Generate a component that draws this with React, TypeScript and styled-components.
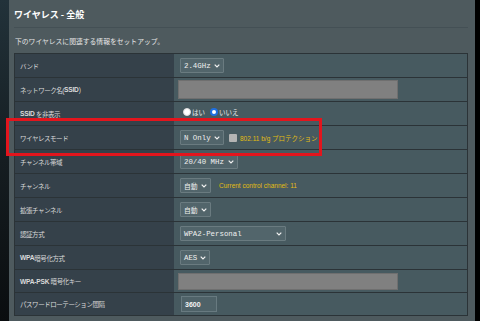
import React from "react";
import styled, { createGlobalStyle } from "styled-components";

const Global = createGlobalStyle`
  html, body { margin: 0; padding: 0; background: #000; }
  body { font-family: "Noto Sans CJK JP", "Liberation Sans", sans-serif; }
`;

const Page = styled.div`
  position: relative;
  width: 480px;
  height: 321px;
  display: flex;
  overflow: hidden;
`;

const LeftStrip = styled.div`
  width: 9px;
  flex: none;
  background: linear-gradient(180deg, #22323a 0%, #151d21 50%, #0a0d0f 100%);
`;

const RightStrip = styled.div`
  width: 5px;
  flex: none;
  background: #000;
`;

const Panel = styled.div`
  flex: 1;
  background: #4e5a5e;
  display: flex;
  flex-direction: column;
  padding: 0 7px 0 5px;
`;

const Title = styled.div`
  height: 27px;
  box-sizing: border-box;
  padding-top: 8px;
  font-family: "Noto Sans CJK JP", sans-serif;
  font-size: 9px;
  font-weight: 700;
  color: #fff;
  line-height: 14px;
`;

const Rule = styled.div`
  height: 1px;
  background: #445055;
`;

const Subtitle = styled.div`
  height: 25px;
  display: flex;
  align-items: center;
  padding-left: 1px;
  padding-top: 1px;
  box-sizing: border-box;
  font-size: 6.8px;
  color: #e6e6e6;
`;

const Table = styled.div`
  border: 1px solid #2b3337;
  border-bottom: none;
  display: flex;
  flex-direction: column;
`;

const Row = styled.div<{ $h: number }>`
  height: ${(p) => p.$h}px;
  box-sizing: border-box;
  display: grid;
  grid-template-columns: 159px 1fr;
  border-bottom: 1px solid #2b3337;
`;

const Label = styled.div`
  background: #35414a;
  display: flex;
  align-items: center;
  padding-left: 5px;
  font-family: "Liberation Sans", "Noto Sans CJK JP", sans-serif;
  font-size: 6.5px;
  letter-spacing: -0.45px;
  color: #dadada;
  white-space: nowrap;
`;

const Latin = styled.span`
  font-weight: 700;
  font-size: 6.6px;
  letter-spacing: -0.2px;
`;

const Value = styled.div`
  background: #475a60;
  display: flex;
  align-items: center;
  padding-left: 6px;
`;

const Select = styled.div<{ $w: number }>`
  width: ${(p) => p.$w}px;
  height: 15px;
  box-sizing: border-box;
  background: #52656b;
  border: 1px solid #6a7b80;
  border-radius: 1px;
  display: flex;
  align-items: center;
  justify-content: space-between;
  padding: 0 3px 0 3px;
  font-family: "Liberation Mono", "Noto Sans CJK JP", monospace;
  font-size: 7.4px;
  color: #f0f0f0;
`;

const SelText = styled.span`
  &:lang(ja) { font-size: 6.8px; }
`;

const TextInput = styled.div<{ $w: number; $h: number }>`
  width: ${(p) => p.$w}px;
  height: ${(p) => p.$h}px;
  box-sizing: border-box;
  background: #808080;
  border: 1px solid #6f6f6f;
  margin-left: -2px;
`;

const NumInput = styled.div`
  width: 36px;
  height: 16px;
  box-sizing: border-box;
  margin-left: 1px;
  background: #4f6268;
  border: 1px solid #687a80;
  display: flex;
  align-items: center;
  padding-left: 3px;
  font-family: "Liberation Sans", sans-serif;
  font-weight: 700;
  font-size: 7px;
  color: #f4f4f4;
`;

const Note = styled.span<{ $ml: number }>`
  margin-left: ${(p) => p.$ml}px;
  font-family: "Liberation Sans", "Noto Sans CJK JP", sans-serif;
  font-size: 6.5px;
  color: #e2bd12;
  white-space: nowrap;
`;

const Check = styled.span`
  width: 8px;
  height: 8px;
  margin-left: 5px;
  border-radius: 1px;
  background: #b4b4b4;
  flex: none;
`;

const RadioGroup = styled.div`
  display: flex;
  align-items: center;
  margin-left: 3px;
  margin-top: -3px;
  font-size: 6.5px;
  color: #f0f0f0;
`;

const Radio = styled.span<{ $on?: boolean }>`
  width: 8px;
  height: 8px;
  box-sizing: border-box;
  border-radius: 50%;
  background: #fff;
  border: ${(p) => (p.$on ? "2px solid #1e6fe0" : "1px solid #ddd")};
  margin-right: 1px;
  flex: none;
`;

const RadioText = styled.span`
  margin-right: 5px;
`;

const Annotation = styled.div`
  position: absolute;
  left: 6px;
  top: 118px;
  width: 316px;
  height: 38px;
  box-sizing: border-box;
  border: 3px solid #e3151d;
  pointer-events: none;
`;

const Chevron = () => (
  <svg width="6" height="4" viewBox="0 0 6 4" style={{ flex: "none" }}>
    <path d="M0.7 0.7 L3 3 L5.3 0.7" fill="none" stroke="#f2f2f2" strokeWidth="1.2" />
  </svg>
);

const Sel = ({ w, ja, children }: { w: number; ja?: boolean; children: React.ReactNode }) => (
  <Select $w={w}>
    <SelText lang={ja ? "ja" : "en"}>{children}</SelText>
    <Chevron />
  </Select>
);

export default function App() {
  return (
    <>
      <Global />
      <Page>
        <LeftStrip />
        <Panel>
          <Title>ワイヤレス - 全般</Title>
          <Rule />
          <Subtitle>下のワイヤレスに関連する情報をセットアップ。</Subtitle>
          <Table>
            <Row $h={24}>
              <Label>バンド</Label>
              <Value>
                <Sel w={44}>2.4GHz</Sel>
              </Value>
            </Row>
            <Row $h={24}>
              <Label>
                ネットワーク名(<Latin>SSID</Latin>)
              </Label>
              <Value>
                <TextInput $w={220} $h={19} />
              </Value>
            </Row>
            <Row $h={24}>
              <Label>
                <Latin>SSID</Latin>&nbsp;を非表示
              </Label>
              <Value>
                <RadioGroup>
                  <Radio />
                  <RadioText>はい</RadioText>
                  <Radio $on />
                  <RadioText>いいえ</RadioText>
                </RadioGroup>
              </Value>
            </Row>
            <Row $h={24}>
              <Label>ワイヤレスモード</Label>
              <Value>
                <Sel w={44}>N Only</Sel>
                <Check />
                <Note $ml={3}>802.11 b/g プロテクション</Note>
              </Value>
            </Row>
            <Row $h={24}>
              <Label>チャンネル帯域</Label>
              <Value>
                <Sel w={58}>20/40 MHz</Sel>
              </Value>
            </Row>
            <Row $h={24}>
              <Label>チャンネル</Label>
              <Value>
                <Sel w={31} ja>自動</Sel>
                <Note $ml={8}>Current control channel: 11</Note>
              </Value>
            </Row>
            <Row $h={24}>
              <Label>拡張チャンネル</Label>
              <Value>
                <Sel w={31} ja>自動</Sel>
              </Value>
            </Row>
            <Row $h={24}>
              <Label>認証方式</Label>
              <Value>
                <Sel w={106}>WPA2-Personal</Sel>
              </Value>
            </Row>
            <Row $h={24}>
              <Label>
                <Latin>WPA</Latin>暗号化方式
              </Label>
              <Value>
                <Sel w={30}>AES</Sel>
              </Value>
            </Row>
            <Row $h={23}>
              <Label>
                <Latin>WPA-PSK</Latin>&nbsp;暗号化キー
              </Label>
              <Value>
                <TextInput $w={220} $h={17} />
              </Value>
            </Row>
            <Row $h={23}>
              <Label>パスワードローテーション間隔</Label>
              <Value>
                <NumInput>3600</NumInput>
              </Value>
            </Row>
          </Table>
        </Panel>
        <RightStrip />
        <Annotation />
      </Page>
    </>
  );
}
